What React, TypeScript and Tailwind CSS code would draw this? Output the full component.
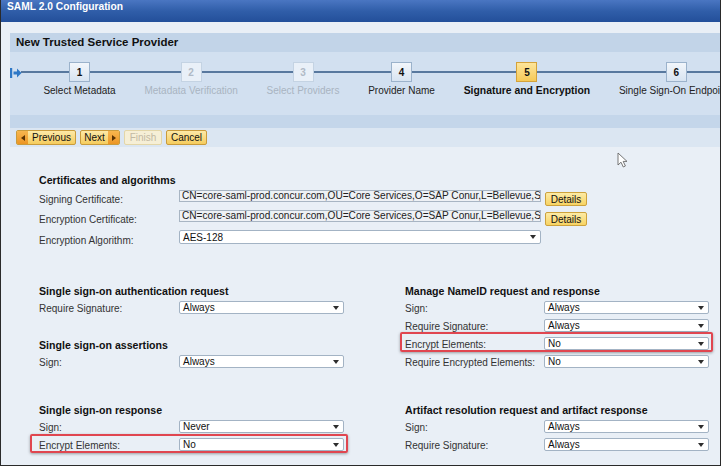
import React from "react";

const FONT = "font-['Liberation_Sans',Arial,Helvetica,sans-serif]";

type StepState = "done" | "disabled" | "current";

const steps: { n: number; label: string; state: StepState }[] = [
  { n: 1, label: "Select Metadata", state: "done" },
  { n: 2, label: "Metadata Verification", state: "disabled" },
  { n: 3, label: "Select Providers", state: "disabled" },
  { n: 4, label: "Provider Name", state: "done" },
  { n: 5, label: "Signature and Encryption", state: "current" },
  { n: 6, label: "Single Sign-On Endpoints", state: "done" },
];

const CERT = "CN=core-saml-prod.concur.com,OU=Core Services,O=SAP Conur,L=Bellevue,S";

function Step({ n, label, state }: { n: number; label: string; state: StepState }) {
  const box =
    state === "current"
      ? "border-[#d4a23a] bg-gradient-to-b from-[#fde59a] to-[#f6c955] text-[#111]"
      : state === "disabled"
        ? "border-[#c4d3e3] bg-[#e9f0f8] text-[#b0bac6]"
        : "border-[#9bb2cb] bg-gradient-to-b from-[#f2f6fb] to-[#d8e4f1] text-[#111]";
  const text =
    state === "current"
      ? "font-bold text-[10.4px] text-[#111]"
      : state === "disabled"
        ? "text-[10px] text-[#a9b4c1]"
        : "text-[10px] text-[#222]";
  return (
    <div className="relative z-10 flex shrink-0 flex-col items-center px-[14.4px]">
      <div className={`mt-[10px] flex h-[20px] w-[21px] items-center justify-center border text-[10px] font-bold ${box}`}>
        {n}
      </div>
      <div className={`mt-[2px] whitespace-nowrap leading-[13px] ${text}`}>{label}</div>
    </div>
  );
}

function WizardButton({
  label,
  width,
  icon,
  disabled,
}: {
  label: string;
  width: string;
  icon?: "left" | "right";
  disabled?: boolean;
}) {
  const base = disabled
    ? "border-[#e3d6a8] bg-[#f6efd6] text-[#c2b9a3]"
    : "border-[#c99b3c] bg-gradient-to-b from-[#fde9a6] to-[#f5cc5c] text-[#111]";
  const arrow = (
    <div className="flex h-full w-[11px] items-center justify-center bg-gradient-to-b from-[#f7b64e] to-[#ec9622]">
      {icon === "left" ? (
        <span className="h-0 w-0 border-y-[3px] border-r-[4px] border-y-transparent border-r-[#5a3303]" />
      ) : (
        <span className="h-0 w-0 border-y-[3px] border-l-[4px] border-y-transparent border-l-[#5a3303]" />
      )}
    </div>
  );
  return (
    <div className={`flex h-[15px] ${width} items-center overflow-hidden rounded-[2px] border text-[10px] leading-[13px] ${base}`}>
      {icon === "left" && arrow}
      <span className="flex-1 text-center">{label}</span>
      {icon === "right" && arrow}
    </div>
  );
}

function Select({ value, width, height = "h-[13px]" }: { value: string; width: string; height?: string }) {
  return (
    <div
      className={`mt-[1px] flex ${height} ${width} items-center justify-between rounded-[2px] border border-[#a3b3c4] bg-white pl-[3px] pr-[4px] text-[10px] leading-[11px] text-[#111]`}
    >
      <span>{value}</span>
      <span className="h-0 w-0 border-x-[3.5px] border-t-[4px] border-x-transparent border-t-[#2d2d2d]" />
    </div>
  );
}

function Heading({ children }: { children: React.ReactNode }) {
  return <div className="h-[15px] whitespace-nowrap text-[10.6px] font-bold leading-[13px] text-[#111]">{children}</div>;
}

function Row({
  label,
  value,
  labelWidth,
  highlight,
}: {
  label: string;
  value: string;
  labelWidth: string;
  highlight?: "left" | "right";
}) {
  return (
    <div className="relative flex h-[18px] items-start">
      {highlight === "left" && (
        <div className="pointer-events-none absolute -left-[9px] -right-[4px] -top-[3px] bottom-[2px] rounded-[2px] border-2 border-[#e04650] shadow-[0_1px_3px_rgba(0,0,0,0.35)]" />
      )}
      {highlight === "right" && (
        <div className="pointer-events-none absolute -left-[5px] -right-[4px] -top-[4px] bottom-[2px] rounded-[2px] border-2 border-[#e04650] shadow-[0_1px_3px_rgba(0,0,0,0.35)]" />
      )}
      <div className={`${labelWidth} whitespace-nowrap pt-[2px] text-[10px] leading-[13px] text-[#333]`}>{label}</div>
      <Select value={value} width="w-[165px]" />
    </div>
  );
}

function CertRow({ label }: { label: string }) {
  return (
    <div className="flex h-[20px] items-start">
      <div className="w-[140px] pt-[5px] text-[10px] leading-[12px] text-[#333]">{label}</div>
      <div className="mt-[1px] h-[12px] w-[362px] overflow-hidden whitespace-nowrap border border-[#a8b5c3] bg-[#eef1f5] pl-[2px] text-[10.1px] leading-[10px] text-[#222]">
        {CERT}
      </div>
      <div className="ml-[4px] mt-[3px] flex h-[14px] w-[42px] items-center justify-center rounded-[2px] border border-[#cda23d] bg-gradient-to-b from-[#fdeba5] to-[#f7d361] text-[10px] text-[#111]">
        Details
      </div>
    </div>
  );
}

export default function App() {
  return (
    <div className={`h-[468px] w-[722px] overflow-hidden bg-white ${FONT}`}>
      <div className="relative h-[466px] w-[721px] overflow-hidden border-x border-b border-[#2a2a2a] bg-[#e9eff6]">
        {/* window title */}
        <div className="h-[22px] bg-gradient-to-b from-[#4a76c2] via-[#305ea9] to-[#234f9a] pl-[6px] text-[10.25px] font-bold leading-[14px] text-white">
          SAML 2.0 Configuration
        </div>

        <div className="pt-[11px]">
          <div className="ml-[9px]">
            <div className="h-[19px] bg-[#c2d4e8] pl-[6px] text-[11.5px] font-bold leading-[19px] text-[#111]">
              New Trusted Service Provider
            </div>

            {/* roadmap */}
            <div className="relative flex h-[63px] overflow-hidden bg-[#d2e0f0] pl-[19px]">
              <div className="absolute left-[11px] right-0 top-[19px] h-[2px] bg-[#58789e]" />
              <svg className="absolute left-0 top-[16px]" width="12" height="10" viewBox="0 0 12 10">
                <rect x="0" y="0" width="2.2" height="10" fill="#2f78c6" />
                <rect x="3.5" y="3.5" width="4" height="3" fill="#2f78c6" />
                <path d="M7 0.5 L11.5 5 L7 9.5 Z" fill="#2f78c6" />
              </svg>
              {steps.map((s) => (
                <Step key={s.n} {...s} />
              ))}
            </div>

            <div className="h-[13px] bg-[#c4d6ea]" />

            <div className="flex h-[19px] items-start gap-[4px] bg-[#dbe6f2] pl-[6px] pt-[2px]">
              <WizardButton label="Previous" width="w-[60px]" icon="left" />
              <WizardButton label="Next" width="w-[40px]" icon="right" />
              <WizardButton label="Finish" width="w-[38px]" disabled />
              <WizardButton label="Cancel" width="w-[41px]" />
            </div>
          </div>

          {/* form */}
          <div className="pl-[38px] pt-[27px]">
            <Heading>Certificates and algorithms</Heading>
            <CertRow label="Signing Certificate:" />
            <CertRow label="Encryption Certificate:" />
            <div className="flex h-[20px] items-start">
              <div className="w-[140px] pt-[6px] text-[10px] leading-[12px] text-[#333]">Encryption Algorithm:</div>
              <Select value="AES-128" width="w-[362px]" height="h-[14px]" />
            </div>

            <div className="mt-[36px] flex gap-[61px]">
              <div className="w-[305px]">
                <Heading>Single sign-on authentication request</Heading>
                <Row label="Require Signature:" value="Always" labelWidth="w-[140px]" />
                <div className="h-[21px]" />
                <Heading>Single sign-on assertions</Heading>
                <Row label="Sign:" value="Always" labelWidth="w-[140px]" />
              </div>
              <div className="w-[304px]">
                <Heading>Manage NameID request and response</Heading>
                <Row label="Sign:" value="Always" labelWidth="w-[139px]" />
                <Row label="Require Signature:" value="Always" labelWidth="w-[139px]" />
                <Row label="Encrypt Elements:" value="No" labelWidth="w-[139px]" highlight="right" />
                <Row label="Require Encrypted Elements:" value="No" labelWidth="w-[139px]" />
              </div>
            </div>

            <div className="mt-[32px] flex gap-[61px]">
              <div className="w-[305px]">
                <Heading>Single sign-on response</Heading>
                <Row label="Sign:" value="Never" labelWidth="w-[140px]" />
                <Row label="Encrypt Elements:" value="No" labelWidth="w-[140px]" highlight="left" />
              </div>
              <div className="w-[304px]">
                <Heading>Artifact resolution request and artifact response</Heading>
                <Row label="Sign:" value="Always" labelWidth="w-[139px]" />
                <Row label="Require Signature:" value="Always" labelWidth="w-[139px]" />
              </div>
            </div>
          </div>
        </div>

        {/* mouse pointer */}
        <svg className="pointer-events-none absolute left-[616px] top-[152px]" width="12" height="16" viewBox="0 0 12 16">
          <path d="M1 1 L1 13 L4 10.2 L6.3 15 L8.4 14 L6.2 9.4 L10 9.4 Z" fill="#fff" stroke="#666" strokeWidth="0.9" strokeLinejoin="round" />
        </svg>
      </div>
    </div>
  );
}
